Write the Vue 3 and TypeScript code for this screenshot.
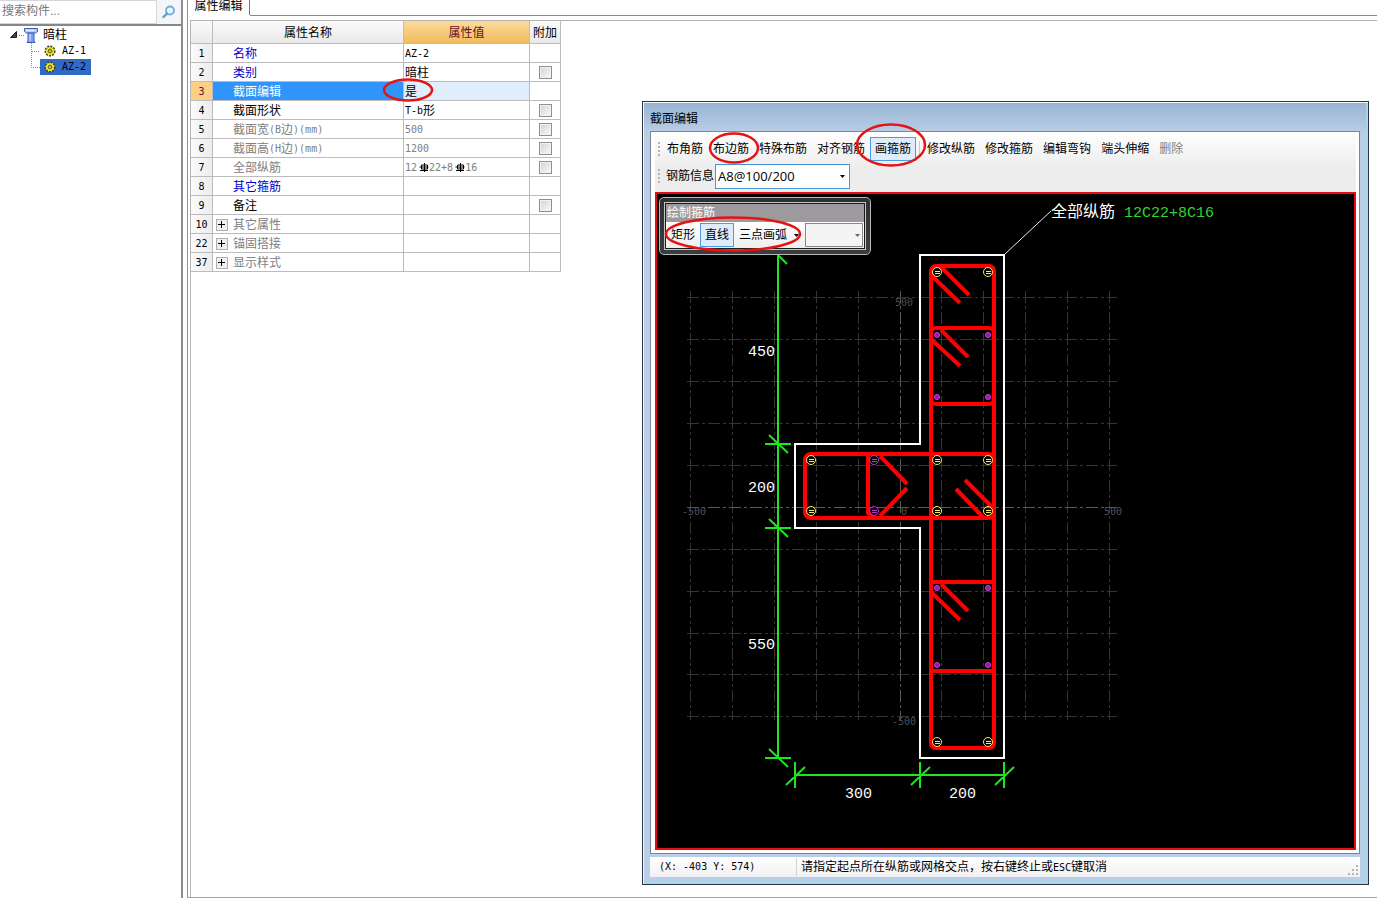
<script setup lang="ts">
import { ref } from 'vue'

interface Run { text: string; kind: 'cjk' | 'latin' | 'bar' }
interface Row {
  no: number
  name: string
  value: string
  tone: 'blue' | 'black' | 'grey'
  check?: boolean
  group?: boolean
  selected?: boolean
}

const rows: Row[] = [
  { no: 1, name: '名称', value: 'AZ-2', tone: 'blue' },
  { no: 2, name: '类别', value: '暗柱', tone: 'blue', check: true },
  { no: 3, name: '截面编辑', value: '是', tone: 'black', selected: true },
  { no: 4, name: '截面形状', value: 'T-b形', tone: 'black', check: true },
  { no: 5, name: '截面宽(B边)(mm)', value: '500', tone: 'grey', check: true },
  { no: 6, name: '截面高(H边)(mm)', value: '1200', tone: 'grey', check: true },
  { no: 7, name: '全部纵筋', value: '12#22+8#16', tone: 'grey', check: true },
  { no: 8, name: '其它箍筋', value: '', tone: 'blue' },
  { no: 9, name: '备注', value: '', tone: 'black', check: true },
  { no: 10, name: '其它属性', value: '', tone: 'grey', group: true },
  { no: 22, name: '锚固搭接', value: '', tone: 'grey', group: true },
  { no: 37, name: '显示样式', value: '', tone: 'grey', group: true },
]

// Splits mixed text so half-width and full-width characters keep a 1:2 pitch.
// "#" stands for the rebar grade symbol.
function runs(s: string): Run[] {
  return (s.match(/#|[\x20-\x22\x24-\x7e]+|[^\x20-\x7e]+/g) ?? []).map((text) => ({
    text,
    kind: text === '#' ? 'bar' : /^[\x20-\x7e]/.test(text) ? 'latin' : 'cjk',
  }))
}

const search = ref('')
const barInfo = ref('A8@100/200')
const arcMode = ref('')
const toolsA = ['布角筋', '布边筋', '特殊布筋', '对齐钢筋', '画箍筋']
const toolsB = ['修改纵筋', '修改箍筋', '编辑弯钩', '端头伸缩']

const gridX = [690, 732, 774, 816, 858, 900, 941, 983, 1025, 1067, 1109]
const gridY = [297, 339, 381, 423, 465, 507, 549, 591, 633, 674, 716]
const cornerBars = [
  [937, 272], [988, 272], [937, 460], [988, 460], [937, 511],
  [988, 511], [811, 460], [811, 511], [937, 742], [988, 742],
]
const tieBars = [[874, 460], [874, 511]]
const sideBars = [
  [937, 335], [988, 335], [937, 397], [988, 397],
  [937, 588], [988, 588], [937, 665], [988, 665],
]
</script>

<template>
  <div class="app">
    <aside class="side">
      <form class="search" @submit.prevent>
        <input v-model="search" type="text" aria-label="搜索构件" placeholder="搜索构件..." />
        <button type="submit" aria-label="搜索">
          <svg width="14" height="14" viewBox="0 0 14 14">
            <circle cx="8" cy="5.5" r="4" fill="#eef7fd" stroke="#6aaede" stroke-width="1.8" />
            <path d="M5 8.6 1.5 12" stroke="#5a9fd2" stroke-width="2.4" stroke-linecap="round" />
          </svg>
        </button>
      </form>
      <ul class="tree">
        <li>
          <div class="node root">
            <svg width="30" height="16" viewBox="0 0 30 16">
              <path d="M6.500 4.500v6h-6z" fill="#444" stroke="#222" />
              <path d="M9 8.500h5" stroke="#888" stroke-dasharray="1 1" />
              <path d="M14.500 1.500h13v3l-2 1.500h-9l-2-1.500z" fill="#b9cdf5" stroke="#3b5fb5" />
              <path d="M18 6h6v8l1 1.500h-8l1-1.500z" fill="#7fa0e6" stroke="#3b5fb5" />
              <path d="M20 7v7M16 3.500h8" stroke="#e8f0ff" />
            </svg>
            <span>暗柱</span>
          </div>
          <ul>
            <li v-for="(n, i) in ['AZ-1', 'AZ-2']" :key="n" class="node leaf">
              <svg class="branch" width="9" height="16" viewBox="0 0 9 16">
                <path :d="i === 0 ? 'M.5 0V16M1 8.500H9' : 'M.5 0V8.500H9'" fill="none" stroke="#888" stroke-dasharray="1 1" />
              </svg>
              <span class="tag" :class="{ on: i === 1 }">
                <svg width="12" height="12" viewBox="0 0 12 12">
                  <circle cx="6" cy="6" r="4.800" fill="#f4ee20" stroke="#333" stroke-width="1.400" stroke-dasharray="2 1.200" />
                  <path d="M6 2.500v7M2.500 6h7M3.500 3.500l5 5M8.500 3.500l-5 5" stroke="#8a8200" stroke-width=".6" />
                  <circle cx="6" cy="6" r="1.500" fill="#fff66a" stroke="#333" stroke-width=".8" />
                </svg>
                <span class="latin">{{ n }}</span>
              </span>
            </li>
          </ul>
        </li>
      </ul>
    </aside>

    <main class="main">
      <div class="tabs"><button class="tab" type="button">属性编辑</button><i></i></div>
      <div class="sheet">
        <table>
          <colgroup><col class="c-no" /><col class="c-name" /><col class="c-val" /><col class="c-add" /></colgroup>
          <thead>
            <tr><th></th><th>属性名称</th><th class="hot">属性值</th><th>附加</th></tr>
          </thead>
          <tbody>
            <tr v-for="r in rows" :key="r.no" :class="[r.tone, { sel: r.selected }]">
              <th scope="row"><span class="latin">{{ r.no }}</span></th>
              <td class="name">
                <div class="cell">
                  <span class="slot"><button v-if="r.group" type="button" class="plus" :aria-label="'展开' + r.name">
                    <svg width="11" height="11" viewBox="0 0 11 11"><path d="M2 5.500h7M5.500 2v7" stroke="#000" /></svg>
                  </button></span>
                  <span v-for="(p, i) in runs(r.name)" :key="i" :class="p.kind">{{ p.text }}</span>
                </div>
              </td>
              <td class="val">
                <div class="cell">
                  <template v-for="(p, i) in runs(r.value)" :key="i">
                    <svg v-if="p.kind === 'bar'" class="grade" width="10" height="9" viewBox="0 0 10 9">
                      <path d="M2.500 2h6v4h-6zM5.500 0v9M.5 4h9M1 7.500h8" fill="none" stroke="#000" />
                    </svg>
                    <span v-else :class="p.kind">{{ p.text }}</span>
                  </template>
                </div>
              </td>
              <td class="add"><input v-if="r.check" type="checkbox" :aria-label="'附加 ' + r.name" /></td>
            </tr>
          </tbody>
        </table>
      </div>
    </main>

    <section class="dialog" role="dialog" aria-label="截面编辑">
      <header class="caption">截面编辑</header>
      <div class="panel">
        <div class="bars">
          <div class="bar">
            <i class="grip"></i>
            <button v-for="t in toolsA" :key="t" type="button" class="tool" :class="{ active: t === '画箍筋' }">{{ t }}</button>
            <i class="sep"></i>
            <button v-for="t in toolsB" :key="t" type="button" class="tool">{{ t }}</button>
            <button type="button" class="tool" disabled>删除</button>
          </div>
          <div class="bar">
            <i class="grip"></i>
            <label class="info" for="bar-info">钢筋信息</label>
            <span class="combo">
              <select id="bar-info" v-model="barInfo"><option>A8@100/200</option></select>
              <svg width="5" height="3" viewBox="0 0 5 3"><path d="M0 0h5L2.500 3z" /></svg>
            </span>
          </div>
        </div>

        <div class="canvas">
          <svg class="drawing" width="100%" height="100%">
            <g transform="translate(-657 -194)">
              <g class="grid">
                <line v-for="x in gridX" :key="'x' + x" :x1="x + 0.5" :x2="x + 0.5" y1="291" y2="720" :class="{ axis: x === 900 }" />
                <line v-for="y in gridY" :key="'y' + y" :y1="y + 0.5" :y2="y + 0.5" x1="687" x2="1117" :class="{ axis: y === 507 }" />
              </g>
              <g class="ticks">
                <text x="895" y="306">500</text>
                <text x="682" y="515">-500</text>
                <text x="901" y="515">0</text>
                <text x="1104" y="515">500</text>
                <text x="892" y="725">-500</text>
              </g>
              <path class="outline" d="M920 255H1004V758H920V528H795V444H920Z" />
              <path class="leader" d="M1005 254 1051 211" />
              <g class="ties">
                <rect x="931" y="266" width="63" height="482" rx="5" />
                <rect x="805" y="454" width="189" height="64" rx="6" />
                <rect x="931" y="328" width="63" height="76" rx="5" />
                <path d="M931 582H994M931 671H994M868 454V513L873 518" />
                <path d="M931 275 960 303M941 267 969 295" />
                <path d="M931 339 960 366M941 330 968 357" />
                <path d="M931 592 960 620M941 584 968 611" />
                <path d="M880 456 907 484M880 516 907 488" />
                <path d="M956 489 983 517M965 480 993 508" />
              </g>
              <g v-for="(b, i) in cornerBars" :key="'c' + i" class="corner">
                <circle :cx="b[0]" :cy="b[1]" r="4.500" />
                <path :d="`M${b[0] - 2} ${b[1] - 0.5}h5M${b[0] - 2} ${b[1] + 1.5}h5`" />
              </g>
              <g v-for="(b, i) in tieBars" :key="'t' + i" class="corner tie">
                <circle :cx="b[0]" :cy="b[1]" r="4.500" />
                <path :d="`M${b[0] - 2} ${b[1] - 0.5}h5M${b[0] - 2} ${b[1] + 1.5}h5`" />
              </g>
              <circle v-for="(b, i) in sideBars" :key="'s' + i" class="sidebar" :cx="b[0]" :cy="b[1]" r="2.500" />
              <path
                class="dims"
                d="M778 255V758M778 255 787 264M765 444H791M769 435 788 453M765 528H791M769 519 788 537M765 758H791M769 749 788 767M795 775H1004M795 762V788M786 785 805 767M920 762V788M911 785 930 767M1004 762V788M995 785 1014 767"
              />
              <g class="labels">
                <text x="748" y="356">450</text>
                <text x="748" y="492">200</text>
                <text x="748" y="649">550</text>
                <text x="845" y="798">300</text>
                <text x="949" y="798">200</text>
                <text x="1051" y="217" class="cjk-label">全部纵筋</text>
                <text x="1124" y="217" class="green">12C22+8C16</text>
              </g>
            </g>
          </svg>

          <div class="palette">
            <div class="palette-in">
              <div class="palette-title">绘制箍筋</div>
              <div class="palette-row">
                <button type="button" class="tool">矩形</button>
                <button type="button" class="tool active">直线</button>
                <button type="button" class="tool arc">三点画弧
                  <svg width="5" height="3" viewBox="0 0 5 3"><path d="M0 0h5L2.500 3z" /></svg>
                </button>
                <span class="combo small">
                  <select v-model="arcMode" aria-label="画弧方式"><option value=""></option></select>
                  <svg width="5" height="3" viewBox="0 0 5 3"><path d="M0 0h5L2.500 3z" /></svg>
                </span>
              </div>
            </div>
          </div>
        </div>
      </div>
      <footer class="status">
        <span class="coords latin">(X: -403 Y: 574)</span>
        <span class="hint"><span v-for="(p, i) in runs('请指定起点所在纵筋或网格交点，按右键终止或ESC键取消')" :key="i" :class="p.kind">{{ p.text }}</span></span>
        <svg class="sizer" width="12" height="12" viewBox="0 0 12 12">
          <path d="M8 0h2v2h-2zM8 4h2v2h-2zM8 8h2v2h-2zM4 4h2v2h-2zM4 8h2v2h-2zM0 8h2v2h-2z" fill="#b4b4b4" />
        </svg>
      </footer>
    </section>

    <svg class="marks" width="1000" height="300" viewBox="0 0 1000 300">
      <ellipse cx="408" cy="90" rx="24" ry="10.500" />
      <ellipse cx="734" cy="148" rx="24" ry="14.500" />
      <ellipse cx="891" cy="145" rx="34" ry="20.500" />
      <ellipse cx="733" cy="234" rx="67" ry="16.500" />
    </svg>
  </div>
</template>

<style>
body { margin: 0; background: #fff; }
</style>

<style scoped>
* { box-sizing: border-box; }
.app {
  position: relative;
  display: flex;
  min-height: 100vh;
  overflow: hidden;
  font-family: "Liberation Sans", "Noto Sans CJK SC", sans-serif;
  font-size: 12px;
  line-height: 16px;
  color: #000;
}
button, input, select { font: inherit; color: inherit; margin: 0; }
button { padding: 0; border: 0; background: none; }
ul { list-style: none; margin: 0; padding: 0; }
svg { flex: none; display: block; }
.latin { font-family: "DejaVu Sans Mono", monospace; font-size: 10px; white-space: pre; }

.side { width: 183px; flex: none; border-right: 2px solid #8b8d91; }
.search { display: flex; height: 26px; background: #f3f5f8; border-bottom: 2px solid #85878b; }
.search input {
  flex: 1; min-width: 0; padding: 0 2px 2px; border: 1px solid #d4d6da; border-left: 0; outline: 0; background: #fff;
}
.search input::placeholder { color: #777; opacity: 1; }
.search button { width: 24px; display: grid; place-items: center; }
.tree { padding-top: 1px; }
.node { display: flex; align-items: center; height: 16px; }
.root { padding-left: 10px; gap: 3px; }
.leaf { padding-left: 31px; }
.tag { display: flex; align-items: center; gap: 6px; height: 16px; padding: 0 5px 0 4px; }
.tag.on { background: #316ac5; }

.main {
  flex: 1; min-width: 0; display: flex; flex-direction: column;
  margin-left: 4px; border-left: 1px solid #909296; border-bottom: 1px solid #a5a5a5;
}
.tabs { display: flex; height: 16px; }
.tab { width: 62px; height: 15px; padding-bottom: 4px; line-height: 12px; border-right: 1px solid #777; }
.tabs i { flex: 1; border-bottom: 1px solid #8a8a8a; }
.sheet { flex: 1; margin: 4px 0 0 2px; border: 1px solid #b4b4b4; border-width: 1px 0 0 1px; }
table { width: 370px; table-layout: fixed; border-collapse: separate; border-spacing: 0; }
.c-no { width: 22px; }
.c-name { width: 191px; }
.c-val { width: 126px; }
.c-add { width: 31px; }
th, td { height: 19px; padding: 0; border: 1px solid #bcbcbc; border-width: 0 1px 1px 0; font-weight: 400; white-space: nowrap; }
thead th { height: 23px; padding-top: 2px; background: linear-gradient(#fbfbfb, #e9e9e9); }
thead .hot { background: linear-gradient(#fbdc9c, #f0bb5c); color: #6a0d20; }
tbody th { background: linear-gradient(90deg, #fbfbfb, #ececec); }
.cell { display: flex; align-items: center; height: 18px; padding-top: 2px; }
.slot { width: 20px; padding-left: 3px; flex: none; }
.val { padding-left: 1px; }
.val .cell { padding-top: 1px; }
.plus { display: block; width: 12px; height: 12px; border: 1px solid #b0b0b0; background: #f0f0f0; }
.plus svg { margin: -1px 0 0 -1px; }
.grade { margin: 0 0 0 2px; }
.blue .name { color: #0000c8; }
.grey .name, .grey .val { color: #808080; }
.sel th { background: #fbcf86; color: #6a0d20; }
.sel .name { background: #3094fb; color: #fff; }
.sel .val { background: #e0eefc; }
.add { text-align: center; }
.add input {
  appearance: none; display: block; width: 13px; height: 13px; margin: 0 auto;
  border: 1px solid #8e8f8f; background: linear-gradient(135deg, #cfd2d6, #fafafa); box-shadow: inset 0 0 0 1px #f2f2f2;
}

/* floating section editor window */
.dialog {
  position: absolute; left: 642px; right: 8px; top: 101px; bottom: 13px;
  display: flex; flex-direction: column;
  padding: 0 8px 7px 7px;
  border: 1px solid #2b3440;
  background: linear-gradient(#98b4d3, #b9cde5 30px, #b9cfe9);
  box-shadow: inset 1px 1px #f4f9fe, inset -2px -2px #a6d8ec;
}
.caption { height: 29px; padding-top: 9px; line-height: 16px; flex: none; }
.panel { flex: 1; min-height: 0; display: flex; flex-direction: column; padding: 3px 3px 3px 4px; border: 1px solid #7d8696; background: #fff; }
.bars { flex: none; height: 57px; background: linear-gradient(#fdfdfd, #ececec 60%, #eee); }
.bar { display: flex; align-items: center; height: 27px; }
.bar + .bar { height: 28px; }
.grip { width: 2px; height: 14px; margin: 0 2px 0 3px; background: repeating-linear-gradient(#b5b5b5 0 2px, transparent 2px 4px); }
.sep { width: 1px; height: 16px; margin: 0 2px 0 3px; background: #c8c8c8; }
.tool { height: 24px; padding: 0 4px; border: 1px solid transparent; white-space: nowrap; }
.tool.active { border-color: #4f9be0; background: #dfedfb; }
.tool:disabled { color: #808080; }
.info { padding: 0 1px 0 4px; }
.combo { position: relative; width: 135px; height: 25px; }
.combo select {
  appearance: none; width: 100%; height: 100%; padding: 0 2px; border: 1px solid #4a96d4; border-radius: 0; outline: 0; background: #fff;
  font-family: "Open Sans", sans-serif; font-size: 13px;
}
.combo svg { position: absolute; right: 5px; top: 11px; pointer-events: none; }
.canvas { position: relative; flex: 1; min-height: 0; border: 2px solid #e80c10; background: #000; overflow: hidden; }

.grid line { stroke: #343434; stroke-dasharray: 12 3 3 3; }
.grid .axis { stroke: #5a5a5a; }
.ticks text { font: 10px "DejaVu Sans Mono", monospace; fill: #505050; }
.outline { fill: none; stroke: #fff; stroke-width: 2; }
.leader { stroke: #e8e8e8; }
.ties { fill: none; stroke: #f00; stroke-width: 4; }
.corner circle, .corner path { fill: none; stroke: #f4f060; }
.tie circle, .tie path { stroke: #b038c4; }
.sidebar { fill: #a010b4; stroke: #d23ce0; }
.dims { fill: none; stroke: #1ce61c; stroke-width: 2; }
.labels text { font: 15px "Liberation Mono", monospace; fill: #fff; }
.labels .cjk-label { font: 16px "Noto Sans CJK SC", sans-serif; }
.labels .green { fill: #2fd42f; }

.palette {
  position: absolute; left: 2px; top: 3px; width: 212px; height: 58px; padding: 4px 4px;
  border: 1px solid #b4b8b8; border-radius: 5px; background: linear-gradient(#2c3030, #3a3e3e);
}
.palette-in { height: 48px; padding: 1px; border: 1px solid #c4c4c4; background: #1c1c1c; }
.palette-title { height: 18px; padding-left: 1px; line-height: 18px; background: #9c9a9c; color: #fff; }
.palette-row { display: flex; align-items: center; height: 26px; background: linear-gradient(#fff, #eee); }
.palette-row .arc { display: flex; align-items: center; gap: 7px; padding-right: 5px; }
.small { width: 58px; height: 24px; }
.small select { border-color: #888; background: #f4f4f4; }
.small svg { right: 3px; fill: #666; }

.status { display: flex; align-items: center; flex: none; height: 20px; margin-top: 3px; background: linear-gradient(#fff, #f1f1f3); }
.coords { width: 147px; padding-left: 9px; line-height: 18px; border-right: 1px solid #d2d2d2; }
.hint { flex: 1; padding-left: 4px; white-space: nowrap; }
.sizer { align-self: flex-end; }

.marks { position: absolute; left: 0; top: 0; pointer-events: none; }
.marks ellipse { fill: none; stroke: #e31414; stroke-width: 2.500; }
</style>
